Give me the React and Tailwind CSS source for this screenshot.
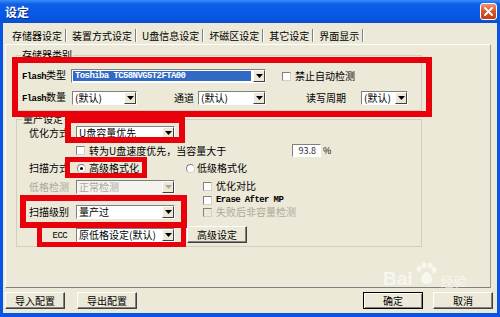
import React from "react";

const cjk = "font-['Noto_Sans_CJK_SC','Noto_Sans',sans-serif]";
const mono = "font-['Liberation_Mono',monospace]";

// small drop-down arrow button of a classic combo box
function Arrow({ disabled }) {
  return (
    <div className="w-[12px] h-full shrink-0 flex items-center justify-center bg-[#ECE9D8] border border-t-white border-l-white border-b-[#404040] border-r-[#404040]">
      <svg width="7" height="4" viewBox="0 0 7 4">
        <path d="M0 0h7L3.5 4z" fill={disabled ? "#ACA899" : "#000"} />
      </svg>
    </div>
  );
}

function Select({ w, children, active, disabled }) {
  return (
    <div
      className={`${w} h-[14px] shrink-0 flex border border-t-[#808080] border-l-[#808080] border-b-white border-r-white ${
        disabled ? "bg-[#F4F3EE]" : "bg-white"
      }`}
    >
      <div
        className={`flex-1 min-w-0 flex items-center px-[2px] text-[10px] leading-[12px] whitespace-nowrap ${
          active ? "bg-[#316AC5] text-white m-[1px] mr-[2px]" : disabled ? "text-[#ACA899]" : "text-black"
        }`}
      >
        {children}
      </div>
      <Arrow disabled={disabled} />
    </div>
  );
}

function Check({ disabled }) {
  return (
    <div
      className={`w-[9px] h-[9px] shrink-0 border border-t-[#808080] border-l-[#808080] border-b-[#D4D0C8] border-r-[#D4D0C8] ${
        disabled ? "bg-[#ECE9D8]" : "bg-white"
      }`}
    />
  );
}

function Radio({ on }) {
  return (
    <div className="w-[9px] h-[9px] shrink-0 rounded-full bg-white border border-t-[#808080] border-l-[#808080] border-b-[#D4D0C8] border-r-[#D4D0C8] flex items-center justify-center">
      {on && <div className="w-[3px] h-[3px] rounded-full bg-black" />}
    </div>
  );
}

function Btn({ w, children, def }) {
  return (
    <div
      className={`${w} h-[17px] shrink-0 flex items-center justify-center text-[10px] leading-none text-black bg-[#ECE9D8] border ${
        def
          ? "border-black shadow-[inset_1px_1px_0_#fff,inset_-1px_-1px_0_#808080]"
          : "border-t-white border-l-white border-b-[#404040] border-r-[#404040] shadow-[inset_-1px_-1px_0_#808080]"
      }`}
    >
      {children}
    </div>
  );
}

function Mono({ children }) {
  return <span className={`${mono} text-[9px] tracking-[-0.6px] font-bold`}>{children}</span>;
}

function Sep() {
  return <div className="w-[2px] h-[13px] border-l border-l-[#808080] border-r border-r-white mx-[3px]" />;
}

const tabs = ["存储器设定", "装置方式设定", "U盘信息设定", "坏磁区设定", "其它设定", "界面显示"];

export default function App() {
  return (
    <div className={`relative w-[500px] h-[317px] flex flex-col bg-[#0A54E3] overflow-hidden ${cjk}`}>
      {/* title bar */}
      <div className="h-[23px] shrink-0 flex items-center justify-between pl-[5px] pr-[3px] bg-[linear-gradient(180deg,#3D8DF6_0%,#0C60EA_18%,#0757E3_75%,#0A4DD2_100%)]">
        <span className="text-white text-[12px] font-bold leading-none [text-shadow:1px_1px_0_#0A2A80]">设定</span>
        <div className="w-[17px] h-[17px] rounded-[3px] border border-white bg-[linear-gradient(180deg,#EE9274,#D9542A_50%,#C43C12)] flex items-center justify-center">
          <svg width="9" height="9" viewBox="0 0 9 9">
            <path d="M1 1L8 8M8 1L1 8" stroke="#fff" strokeWidth="1.8" strokeLinecap="round" />
          </svg>
        </div>
      </div>

      {/* body */}
      <div className="flex-1 mx-[3px] mb-[4px] bg-[#ECE9D8] flex flex-col">
        {/* tabs */}
        <div className="mt-[4px] h-[17px] shrink-0 flex items-center pl-[9px] text-[10px] leading-none text-black">
          {tabs.map((t, i) => (
            <React.Fragment key={t}>
              <span className={i === 0 ? "ml-0" : "ml-[2px]"}>{t}</span>
              <Sep />
            </React.Fragment>
          ))}
        </div>

        {/* tab panel */}
        <div className="relative ml-[2px] w-[486px] h-[244px] shrink-0 border border-t-white border-l-white border-b-[#808080] border-r-[#919B9C] pt-[10px] pl-[10px] text-[10px] leading-none text-black">
          {/* 存储器类别 */}
          <div className="relative w-[406px] h-[56px] border border-[#D0D0BF]">
            <span className="absolute left-[4px] top-[-6px] px-[1px] bg-[#ECE9D8]">存储器类别</span>
            <div className="mt-[13px] h-[14px] flex items-center">
              <div className="w-[54px] pl-[5px] whitespace-nowrap">
                <Mono>Flash</Mono>类型
              </div>
              <Select w="w-[195px]" active>
                <Mono>Toshiba TC58NVG5T2FTA00</Mono>
              </Select>
              <div className="ml-[16px] flex items-center gap-[4px]">
                <Check />
                <span>禁止自动检测</span>
              </div>
            </div>
            <div className="mt-[8px] h-[14px] flex items-center">
              <div className="w-[55px] pl-[5px] whitespace-nowrap">
                <Mono>Flash</Mono>数量
              </div>
              <Select w="w-[65px]">(默认)</Select>
              <span className="ml-[37px]">通道</span>
              <div className="ml-[4px]">
                <Select w="w-[68px]">(默认)</Select>
              </div>
              <span className="ml-[40px]">读写周期</span>
              <div className="ml-[15px]">
                <Select w="w-[47px]">(默认)</Select>
              </div>
            </div>
          </div>

          {/* 量产设定 */}
          <div className="relative mt-[8px] w-[406px] h-[128px] border border-[#D0D0BF]">
            <span className="absolute left-[5px] top-[-6px] px-[1px] bg-[#ECE9D8]">量产设定</span>

            <div className="mt-[6px] h-[14px] flex items-center">
              <div className="w-[59px] pl-[12px] whitespace-nowrap">优化方式</div>
              <Select w="w-[99px]">U盘容量优先</Select>
            </div>

            <div className="mt-[4px] h-[13px] flex items-center">
              <div className="w-[59px]" />
              <Check />
              <span className="ml-[4px] w-[203px] whitespace-nowrap">转为U盘速度优先，当容量大于</span>
              <div className="w-[29px] h-[13px] bg-white border border-t-[#808080] border-l-[#808080] border-b-white border-r-white flex items-center justify-end pr-[4px] text-[9px] text-[#333]">
                93.8
              </div>
              <span className="ml-[2px] text-[9px]">%</span>
            </div>

            <div className="mt-[4px] h-[14px] flex items-center">
              <div className="w-[60px] pl-[12px] whitespace-nowrap">扫描方式</div>
              <Radio on />
              <span className="ml-[3px] w-[97px]">高级格式化</span>
              <Radio />
              <span className="ml-[2px]">低级格式化</span>
            </div>

            <div className="mt-[5px] h-[15px] flex items-start">
              <div className="w-[59px] h-[14px] pl-[12px] flex items-center text-[#ACA899] whitespace-nowrap">低格检测</div>
              <Select w="w-[99px]" disabled>
                正常检测
              </Select>
              <div className="ml-[28px] mt-[1px] flex items-center gap-[4px]">
                <Check />
                <span>优化对比</span>
              </div>
            </div>

            <div className="h-[10px] flex items-center">
              <div className="ml-[186px] flex items-center gap-[4px]">
                <Check />
                <Mono>Erase After MP</Mono>
              </div>
            </div>

            <div className="h-[14px] flex items-center">
              <div className="w-[59px] pl-[12px] whitespace-nowrap">扫描级别</div>
              <Select w="w-[99px]">量产过</Select>
              <div className="ml-[28px] flex items-center gap-[4px] text-[#ACA899]">
                <Check disabled />
                <span>失败后非容量检测</span>
              </div>
            </div>

            <div className="mt-[7px] h-[17px] flex items-center">
              <div className="w-[50px] text-right">
                <span className={`${mono} text-[9px] tracking-[-0.6px]`}>ECC</span>
              </div>
              <div className="ml-[9px]">
                <Select w="w-[99px]">原低格设定(默认)</Select>
              </div>
              <div className="ml-[12px]">
                <Btn w="w-[60px]">高级设定</Btn>
              </div>
            </div>
          </div>

          {/* red annotation frames */}
          <div className="absolute left-[6px] top-[12px] w-[420px] h-[60px] border-[6px] border-[#E8000A]" />
          <div className="absolute left-[59px] top-[72px] w-[120px] h-[26px] border-[6px] border-[#E8000A]" />
          <div className="absolute left-[59px] top-[112px] w-[82px] h-[21px] border-[5px] border-[#E8000A]" />
          <div className="absolute left-[14px] top-[150px] w-[167px] h-[33px] border-[6px] border-[#E8000A]" />
          <div className="absolute left-[31px] top-[177px] w-[149px] h-[25px] border-[5px] border-[#E8000A]" />
        </div>

        {/* bottom buttons */}
        <div className="mt-[4px] pl-[2px] flex items-center">
          <Btn w="w-[60px]">导入配置</Btn>
          <div className="ml-[12px]">
            <Btn w="w-[60px]">导出配置</Btn>
          </div>
          <div className="ml-auto mr-[4px] flex gap-[10px]">
            <Btn w="w-[60px]" def>
              确定
            </Btn>
            <Btn w="w-[60px]">取消</Btn>
          </div>
        </div>
      </div>

      {/* baidu watermark */}
      <div className="absolute left-[383px] top-[262px] flex items-end text-white/60 pointer-events-none">
        <span className="font-['Liberation_Sans',sans-serif] font-bold text-[19px] leading-none">Bai</span>
        <svg width="26" height="24" viewBox="0 0 26 24" className="mb-[2px]">
          <g fill="rgba(255,255,255,0.6)">
            <ellipse cx="6" cy="7" rx="2.5" ry="3" />
            <ellipse cx="11" cy="3.5" rx="2.5" ry="3" />
            <ellipse cx="17" cy="3.5" rx="2.5" ry="3" />
            <ellipse cx="21" cy="8" rx="2.5" ry="3" />
            <path d="M8 18c0-5 3-8 5.5-8S19 13 19 18c0 3-3 4-5.5 4S8 21 8 18z" />
          </g>
        </svg>
        <span className="text-[13px] leading-none mb-[1px] ml-[2px]">经验</span>
      </div>
    </div>
  );
}
